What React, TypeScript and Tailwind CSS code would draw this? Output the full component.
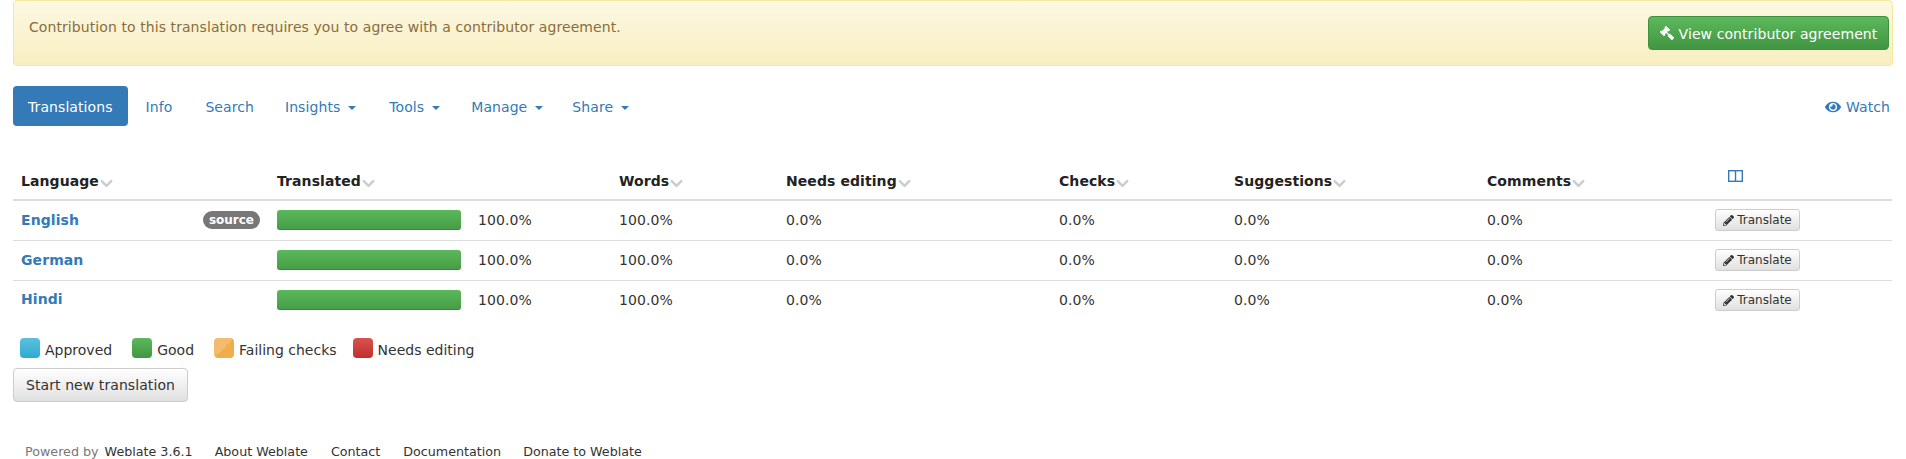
import React from "react";
import { FaEye, FaGavel, FaPencilAlt } from "react-icons/fa";
import { ChevronDown } from "lucide-react";

const rows = [
  { name: "English", source: true },
  { name: "German", source: false },
  { name: "Hindi", source: false },
];

const heads = ["Language", "Translated", "Words", "Needs editing", "Checks", "Suggestions", "Comments"];

function Caret() {
  return <span className="ml-2 inline-block h-0 w-0 border-x-4 border-t-4 border-x-transparent border-t-[#337ab7] align-middle" />;
}

function Pill({ label, caret, className }: { label: string; caret?: boolean; className: string }) {
  return (
    <a className={`block px-[15px] pt-[11px] pb-[9px] text-[#337ab7] ${className}`}>
      {label}
      {caret && <Caret />}
    </a>
  );
}

function Swatch({ className, label, space }: { className: string; label: string; space: string }) {
  return (
    <span className={`flex items-center ${space}`}>
      <span className={`mr-[5px] h-5 w-5 rounded-[4px] ${className}`} />
      <span className="pt-[3px] tracking-normal">{label}</span>
    </span>
  );
}

export default function App() {
  return (
    <div className="h-[459px] overflow-hidden bg-white px-[13px] font-['DejaVu_Sans',sans-serif] text-sm leading-5 tracking-[0.08px] text-[#333]">
      {/* agreement notice */}
      <div className="flex h-[66px] items-start justify-between rounded-[4px] border border-[#f5e79e] bg-linear-to-b from-[#fcf8e3] to-[#f8efc0] pr-[3px] pl-[15px] text-[#8a6d3b]">
        <p className="mt-4">Contribution to this translation requires you to agree with a contributor agreement.</p>
        <button className="mt-[15px] flex h-[34px] w-[241px] items-center justify-center gap-[5px] rounded-[4px] border border-[#3e8f3e] bg-linear-to-b from-[#5cb85c] to-[#419641] pt-0.5 text-white">
          <FaGavel className="size-3.5 -translate-y-px -scale-x-100" />
          View contributor agreement
        </button>
      </div>

      {/* tabs */}
      <div className="mt-5 flex h-10 items-center">
        <a className="block rounded-[4px] bg-[#337ab7] px-[15px] pt-[11px] pb-[9px] text-white">Translations</a>
        <Pill label="Info" className="ml-[3px]" />
        <Pill label="Search" className="ml-[3px]" />
        <Pill label="Insights" caret className="ml-[1px]" />
        <Pill label="Tools" caret className="ml-[3px]" />
        <Pill label="Manage" caret className="ml-[1px]" />
        <Pill label="Share" caret className="ml-[-1px]" />
        <a className="mr-[3px] ml-auto flex items-center gap-[5px] pt-0.5 text-[#337ab7]">
          <FaEye className="size-4" />
          Watch
        </a>
      </div>

      {/* languages */}
      <table className="mt-[38px] w-[1879px] table-fixed border-collapse">
        <colgroup>
          <col className="w-[256px]" />
          <col className="w-[342px]" />
          <col className="w-[167px]" />
          <col className="w-[273px]" />
          <col className="w-[175px]" />
          <col className="w-[253px]" />
          <col className="w-[229px]" />
          <col />
        </colgroup>
        <thead>
          <tr className="h-[36px] border-b-2 border-[#ddd]">
            {heads.map((h) => (
              <th key={h} className="px-2 pb-0.5 text-left align-middle font-bold text-[#222]">
                {h}
                <ChevronDown className="-my-1 ml-[-2px] inline size-[19px] translate-y-[2px] text-[#ccc]" strokeWidth={3} />
              </th>
            ))}
            <th className="px-2 pb-3 text-left align-middle">
              <svg className="ml-3 h-3 w-[15px]" viewBox="0 0 15 12" fill="none" stroke="#337ab7" strokeWidth="1.4">
                <rect x="0.7" y="0.7" width="13.6" height="10.6" />
                <path d="M7.5 1v10" />
              </svg>
            </th>
          </tr>
        </thead>
        <tbody>
          {rows.map((r, i) => (
            <tr key={r.name} className={`h-10 ${i < 2 ? "border-b border-[#ddd]" : ""}`}>
              <td className="px-2">
                <div className="flex items-center justify-between">
                  <a className={`font-bold text-[#337ab7] ${i === 2 ? "-translate-y-px" : ""}`}>{r.name}</a>
                  {r.source && (
                    <span className="mr-[1px] rounded-[10px] bg-[#777] px-[6px] text-xs leading-[18px] font-bold tracking-normal text-white">source</span>
                  )}
                </div>
              </td>
              <td className="px-2">
                <div className="flex items-center">
                  <div className="h-5 w-[184px] rounded-[3px] bg-linear-to-b from-[#5cb85c] to-[#449d44] shadow-[inset_0_-1px_0_rgba(0,0,0,0.15)]" />
                  <span className="ml-[17px]">100.0%</span>
                </div>
              </td>
              <td className="px-2">100.0%</td>
              <td className="px-2">0.0%</td>
              <td className="px-2">0.0%</td>
              <td className="px-2">0.0%</td>
              <td className="px-2">0.0%</td>
              <td className="px-2">
                <button className="-ml-px flex h-[22px] w-[85px] items-center justify-center gap-[3px] rounded-[3px] border border-[#ccc] bg-linear-to-b from-white to-[#e0e0e0] text-xs tracking-normal">
                  <FaPencilAlt className="size-[11px]" />
                  Translate
                </button>
              </td>
            </tr>
          ))}
        </tbody>
      </table>

      {/* legend */}
      <div className="mt-[18px] flex h-5 items-center pl-[7px]">
        <Swatch className="bg-linear-to-b from-[#5bc0de] to-[#2aabd2]" label="Approved" space="mr-5" />
        <Swatch className="bg-linear-to-b from-[#5cb85c] to-[#419641]" label="Good" space="mr-5" />
        <Swatch className="bg-linear-to-br from-[#f4bb6f] from-50% to-[#f0ad4e] to-50%" label="Failing checks" space="mr-4" />
        <Swatch className="bg-linear-to-b from-[#d9534f] to-[#c12e2a]" label="Needs editing" space="mr-4" />
      </div>

      <button className="mt-2.5 block h-[34px] w-[175px] rounded-[4px] border border-[#ccc] bg-linear-to-b from-white to-[#e0e0e0] text-[#333]">
        Start new translation
      </button>

      {/* footer */}
      <div className="mt-[42px] flex pl-3 text-[12.7px] leading-4 tracking-normal">
        <span className="text-[#777]">
          Powered by <a className="ml-0.5 text-[#333]">Weblate 3.6.1</a>
        </span>
        <a className="ml-[22px]">About Weblate</a>
        <a className="ml-[23px]">Contact</a>
        <a className="ml-[23px]">Documentation</a>
        <a className="ml-[22px]">Donate to Weblate</a>
      </div>
    </div>
  );
}
